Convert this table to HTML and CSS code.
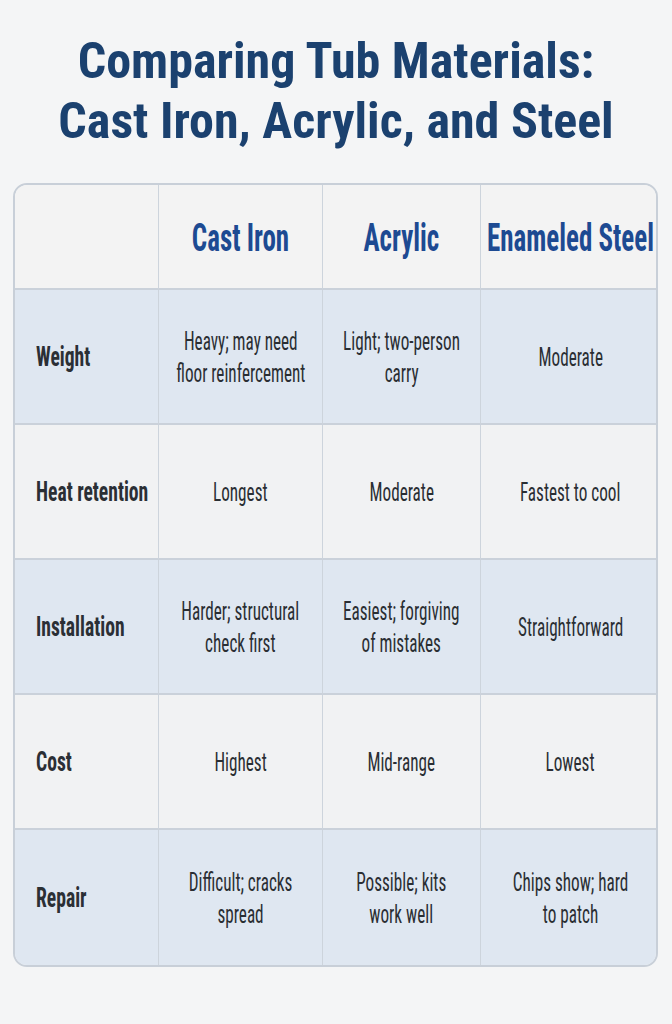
FILE: index.html
```html
<!DOCTYPE html>
<html>
<head>
<meta charset="utf-8">
<link rel="stylesheet" href="styles.css">
</head>
<body>
<main class="page">
  <h1 class="title">Comparing Tub Materials:<br>Cast Iron, Acrylic, and Steel</h1>
  <div class="table">
    <div class="cell head corner"></div>
    <div class="cell head"><span class="t">Cast Iron</span></div>
    <div class="cell head"><span class="t">Acrylic</span></div>
    <div class="cell head"><span class="t">Enameled Steel</span></div>

    <div class="cell label blue"><span class="t">Weight</span></div>
    <div class="cell blue"><span class="t">Heavy; may need<br>floor reinfercement</span></div>
    <div class="cell blue"><span class="t">Light; two-person<br>carry</span></div>
    <div class="cell blue"><span class="t">Moderate</span></div>

    <div class="cell label gray"><span class="t">Heat retention</span></div>
    <div class="cell gray"><span class="t">Longest</span></div>
    <div class="cell gray"><span class="t">Moderate</span></div>
    <div class="cell gray"><span class="t">Fastest to cool</span></div>

    <div class="cell label blue"><span class="t">Installation</span></div>
    <div class="cell blue"><span class="t">Harder; structural<br>check first</span></div>
    <div class="cell blue"><span class="t">Easiest; forgiving<br>of mistakes</span></div>
    <div class="cell blue"><span class="t">Straightforward</span></div>

    <div class="cell label gray"><span class="t">Cost</span></div>
    <div class="cell gray"><span class="t">Highest</span></div>
    <div class="cell gray"><span class="t">Mid-range</span></div>
    <div class="cell gray"><span class="t">Lowest</span></div>

    <div class="cell label blue last"><span class="t">Repair</span></div>
    <div class="cell blue last"><span class="t">Difficult; cracks<br>spread</span></div>
    <div class="cell blue last"><span class="t">Possible; kits<br>work well</span></div>
    <div class="cell blue last"><span class="t">Chips show; hard<br>to patch</span></div>
  </div>
</main>
</body>
</html>
```
FILE: styles.css
```css
html, body {
  margin: 0;
  padding: 0;
  background: #f4f5f6;
}
body {
  font-family: "Roboto Condensed", "Liberation Sans", sans-serif;
}
.page {
  width: 672px;
  height: 1024px;
  padding: 31px 13px 0 13px;
  box-sizing: border-box;
}
.title {
  margin: 0 0 32px 0;
  text-align: center;
  color: #1b416f;
  font-size: 50px;
  line-height: 60px;
  font-weight: bold;
}
.table {
  display: grid;
  grid-template-columns: 144px 164px 158px 179px;
  grid-template-rows: 105px repeat(5, 135px);
  border: 2px solid #c8cfd8;
  border-radius: 14px;
  overflow: hidden;
  width: 645px;
  box-sizing: border-box;
}
.cell {
  display: flex;
  align-items: center;
  justify-content: center;
  text-align: center;
  border-right: 1px solid #cdd4dc;
  border-bottom: 2px solid #cad1da;
  font-size: 26px;
  line-height: 32px;
  color: #2a2e33;
}
.t {
  display: inline-block;
  white-space: nowrap;
  transform: scaleX(0.66);
  transform-origin: center center;
}
.cell:nth-child(4n) {
  border-right: none;
}
.cell.last {
  border-bottom: none;
}
.head {
  background: #f3f3f3;
  color: #1d4a92;
  font-size: 38px;
  line-height: 38px;
  font-weight: bold;
  padding-top: 3px;
}
.head .t {
  transform: scaleX(0.71);
}
.label {
  justify-content: flex-start;
  padding-left: 21px;
  font-weight: bold;
  font-size: 28px;
  color: #2b2f35;
}
.label .t {
  transform: scaleX(0.7);
  transform-origin: left center;
}
.blue {
  background: #dfe7f1;
}
.gray {
  background: #f1f2f3;
}
```
